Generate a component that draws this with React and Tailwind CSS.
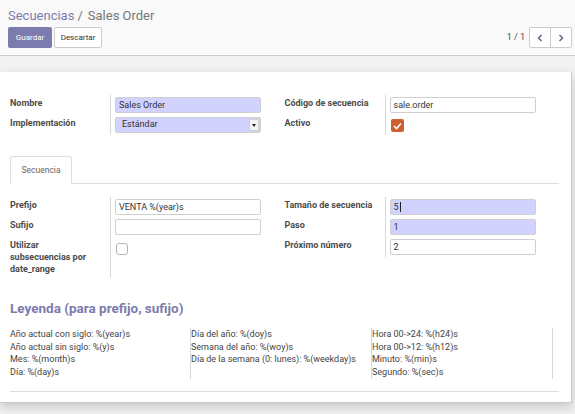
import React from 'react';

const labelCls = 'w-[100px] shrink-0 pt-[2px] text-[9px] leading-[12px] font-bold text-[#4c4c4c] whitespace-nowrap';

function Field({ label, children }) {
  return (
    <div className="flex">
      <div className={labelCls}>{label}</div>
      <div className="flex-1 border-l border-[#d8d8d8] pl-[4px] py-[2px] min-h-[20px]">{children}</div>
    </div>
  );
}

function Input({ value, hl, cursor }) {
  return (
    <div className={'h-[16px] w-[146px] rounded-[2px] border border-[#cfcfcf] px-[3px] text-[9px] leading-[14px] text-[#333] flex items-center ' + (hl ? 'bg-[#d2d2ff]' : 'bg-white')}>
      {value}
      {cursor && <span className="ml-[1px] inline-block h-[10px] w-[1px] bg-[#222]" />}
    </div>
  );
}

const legend = [
  ['Año actual con siglo: %(year)s', 'Año actual sin siglo: %(y)s', 'Mes: %(month)s', 'Día: %(day)s'],
  ['Día del año: %(doy)s', 'Semana del año: %(woy)s', 'Día de la semana (0: lunes): %(weekday)s'],
  ['Hora 00->24: %(h24)s', 'Hora 00->12: %(h12)s', 'Minuto: %(min)s', 'Segundo: %(sec)s'],
];

export default function App() {
  return (
    <div className="h-[414px] w-[575px] overflow-hidden bg-[#f2f2f2]" style={{ fontFamily: 'Roboto, "Liberation Sans", sans-serif' }}>
      {/* control panel */}
      <div className="h-[56px] border-b border-[#cccccc] bg-[#f9f9f9] pl-[8px] pr-[3px] pt-[7px]">
        <div className="text-[13px] leading-[18px] text-[#777]">
          <span className="text-[#7c7bad]">Secuencias</span>
          <span className="ml-[3px]">/</span>
          <span className="ml-[5px]">Sales Order</span>
        </div>
        <div className="mt-[2px] flex items-center">
          <button className="h-[21px] w-[44px] rounded-[2px] bg-[#7c7bad] text-[8px] text-white">Guardar</button>
          <button className="ml-[2px] h-[21px] w-[48px] rounded-[2px] border border-[#cccccc] bg-white text-[8px] text-[#333]">Descartar</button>
          <div className="ml-auto flex items-center">
            <span className="mr-[4px] text-[9px] text-[#4c4c4c]">1 / 1</span>
            <div className="flex h-[21px] rounded-[2px] border border-[#cccccc] bg-white">
              <div className="flex w-[21px] items-center justify-center border-r border-[#cccccc]">
                <svg width="8" height="8" viewBox="0 0 8 8"><path d="M5.5 1 L2.5 4 L5.5 7" fill="none" stroke="#6b6b8a" strokeWidth="1.6" /></svg>
              </div>
              <div className="flex w-[20px] items-center justify-center">
                <svg width="8" height="8" viewBox="0 0 8 8"><path d="M2.5 1 L5.5 4 L2.5 7" fill="none" stroke="#6b6b8a" strokeWidth="1.6" /></svg>
              </div>
            </div>
          </div>
        </div>
      </div>

      {/* sheet */}
      <div className="mt-[16px] mr-[3px] h-[331px] border-r border-b border-[#c9c9d0] bg-white pl-[10px] pr-[12px] pt-[23px] shadow-[0_4px_10px_rgba(0,0,0,0.18)]">
        <div className="flex">
          <div className="w-[275px]">
            <Field label="Nombre"><Input value="Sales Order" hl /></Field>
            <Field label="Implementación">
              <div className="flex h-[16px] w-[146px] items-center rounded-[2px] border border-[#cfcfcf] bg-[#d2d2ff] text-[9px] text-[#333]">
                <span className="flex-1 pl-[6px]">Estándar</span>
                <div className="mr-[1px] flex h-[12px] w-[10px] items-center justify-center border border-[#d0d0d0] bg-[#f4f4f4]">
                  <svg width="4" height="3" viewBox="0 0 4 3"><path d="M0 0 L4 0 L2 3 Z" fill="#222" /></svg>
                </div>
              </div>
            </Field>
          </div>
          <div className="w-[275px]">
            <Field label="Código de secuencia"><Input value="sale.order" /></Field>
            <Field label="Activo">
              <div className="mt-[2px] ml-[1px] flex h-[13px] w-[13px] items-center justify-center rounded-[2px] bg-[#cd5f31]">
                <svg width="9" height="8" viewBox="0 0 9 8"><path d="M1 4 L3.5 6.5 L8 1.5" fill="none" stroke="white" strokeWidth="1.6" /></svg>
              </div>
            </Field>
          </div>
        </div>

        {/* tabs */}
        <div className="mt-[21px] flex border-b border-[#dddddd]">
          <div className="-mb-[1px] flex h-[28px] w-[62px] items-center justify-center rounded-t-[3px] border border-b-white border-[#dddddd] bg-white text-[8.5px] text-[#666]">
            Secuencia
          </div>
        </div>

        <div className="mt-[13px] flex">
          <div className="w-[275px]">
            <Field label="Prefijo"><Input value="VENTA %(year)s" /></Field>
            <Field label="Sufijo"><Input value="" /></Field>
            <Field label={<>Utilizar<br />subsecuencias por<br />date_range</>}>
              <div className="mt-[4px] ml-[1px] h-[12px] w-[12px] rounded-[3px] border border-[#b5b5b5] bg-white" />
              <div className="h-[21px]" />
            </Field>
          </div>
          <div className="w-[275px]">
            <Field label="Tamaño de secuencia"><Input value="5" hl cursor /></Field>
            <Field label="Paso"><Input value="1" hl /></Field>
            <Field label="Próximo número"><Input value="2" /></Field>
          </div>
        </div>

        <h2 className="mt-[21px] text-[13.5px] font-bold leading-[18px] text-[#7c7bad]">Leyenda (para prefijo, sufijo)</h2>
        <div className="mt-[11px] grid w-[543px] grid-cols-3">
          {legend.map((col, i) => (
            <div key={i} className="border-r border-[#d8d8d8] pb-[1px]">
              {col.map(t => (
                <div key={t} className="text-[9px] leading-[12.5px] text-[#444]">{t}</div>
              ))}
            </div>
          ))}
        </div>
        <div className="mt-[12px] border-t border-[#dddddd]" />
      </div>
    </div>
  );
}
